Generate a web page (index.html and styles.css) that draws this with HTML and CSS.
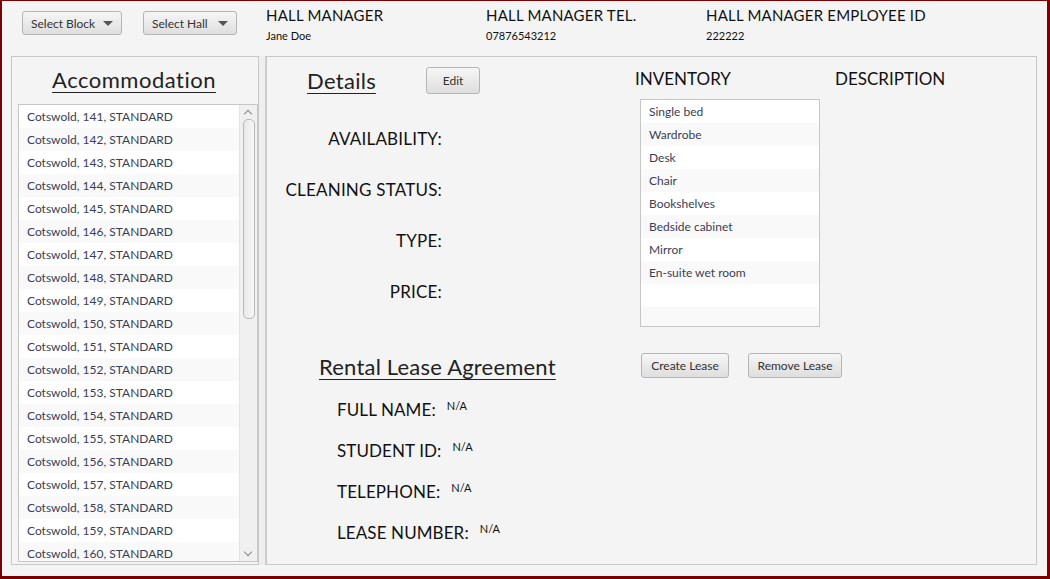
FILE: index.html
```html
<!DOCTYPE html>
<html>
<head>
<meta charset="utf-8">
<link rel="stylesheet" href="styles.css">
</head>
<body>
<div class="window">
  <header class="top">
    <div class="selects">
      <button class="combo">Select Block <span class="arrow"></span></button>
      <button class="combo">Select Hall <span class="arrow"></span></button>
    </div>
    <div class="info">
      <div class="info-col"><div class="info-title">HALL MANAGER</div><div class="info-val">Jane Doe</div></div>
      <div class="info-col"><div class="info-title">HALL MANAGER TEL.</div><div class="info-val">07876543212</div></div>
      <div class="info-col"><div class="info-title">HALL MANAGER EMPLOYEE ID</div><div class="info-val">222222</div></div>
    </div>
  </header>
  <main class="split">
    <section class="left">
      <h2 class="heading acc">Accommodation</h2>
      <div class="list">
        <ul class="rows" id="rooms"></ul>
        <div class="scrollbar">
          <span class="sb-up"></span>
          <span class="thumb"></span>
          <span class="sb-down"></span>
        </div>
      </div>
    </section>
    <div class="divider"></div>
    <section class="right">
      <div class="details">
        <div class="details-head">
          <h2 class="heading det">Details</h2>
          <button class="btn edit">Edit</button>
        </div>
        <div class="fields">
          <div class="field">AVAILABILITY:</div>
          <div class="field">CLEANING STATUS:</div>
          <div class="field">TYPE:</div>
          <div class="field">PRICE:</div>
        </div>
        <h2 class="heading lease">Rental Lease Agreement</h2>
        <div class="lease-fields">
          <div class="lf"><span class="lf-label">FULL NAME:</span><span class="na">N/A</span></div>
          <div class="lf"><span class="lf-label">STUDENT ID:</span><span class="na">N/A</span></div>
          <div class="lf"><span class="lf-label">TELEPHONE:</span><span class="na">N/A</span></div>
          <div class="lf"><span class="lf-label">LEASE NUMBER:</span><span class="na">N/A</span></div>
        </div>
      </div>
      <div class="inventory">
        <div class="inv-titles">
          <div class="inv-title">INVENTORY</div>
          <div class="inv-title desc">DESCRIPTION</div>
        </div>
        <ul class="inv-list">
          <li>Single bed</li>
          <li>Wardrobe</li>
          <li>Desk</li>
          <li>Chair</li>
          <li>Bookshelves</li>
          <li>Bedside cabinet</li>
          <li>Mirror</li>
          <li>En-suite wet room</li>
          <li></li>
          <li class="short"></li>
        </ul>
        <div class="lease-btns">
          <button class="btn create">Create Lease</button>
          <button class="btn remove">Remove Lease</button>
        </div>
      </div>
    </section>
  </main>
</div>
<script>
  var ul = document.getElementById('rooms');
  for (var i = 141; i <= 160; i++) {
    var li = document.createElement('li');
    li.textContent = 'Cotswold, ' + i + ', STANDARD';
    ul.appendChild(li);
  }
</script>
</body>
</html>
```

FILE: styles.css
```css
* { box-sizing: border-box; }
html, body { margin: 0; padding: 0; }
body { font-family: Lato, "Open Sans", sans-serif; color: #111; }
.window {
  width: 1050px; height: 579px;
  background: #f4f4f4;
  border-style: solid; border-color: #7b0000;
  border-width: 1px 3px 3px 2px;
  display: flex; flex-direction: column;
  padding: 0 10px 11px 9px;
}
.top { height: 55px; flex-shrink: 0; display: flex; }
.selects { display: flex; gap: 21px; padding-top: 10px; width: 255px; padding-left: 11px; }
.combo {
  height: 24px; padding: 0 8px 0 8px;
  font: 12px Lato, sans-serif; color: #333; white-space: nowrap;
  border: 1px solid #b5b5b5; border-radius: 3px;
  background: linear-gradient(#f6f6f6, #dedede);
  display: flex; align-items: center; gap: 8px;
}
.combo:first-child { width: 100px; }
.combo:last-child { width: 94px; }
.arrow { width: 0; height: 0; border-left: 5px solid transparent; border-right: 5px solid transparent; border-top: 5px solid #555; margin-left: auto; }
.info { display: flex; padding-top: 5px; }
.info-col { width: 220px; }
.info-title { font-size: 15px; letter-spacing: 0.2px; line-height: 18px; }
.info-val { font-size: 11px; margin-top: 5px; }
.split { flex: 1; min-height: 0; display: flex; }
.left { width: 248px; border: 1px solid #c8c8c8; display: flex; flex-direction: column; align-items: center; padding: 6px 0 2px 6px; min-height: 0; }
.heading { font-weight: normal; text-decoration: underline; text-decoration-thickness: 1px; text-underline-offset: 4px; margin: 0; color: #222; }
.acc { font-size: 22px; letter-spacing: 0.5px; margin: 3px 0 11px -8px; }
.list { flex: 1; min-height: 0; width: 240px; align-self: flex-start; border: 1px solid #c6c6c6; background: #fff; display: flex; overflow: hidden; }
.rows { list-style: none; margin: 0; padding: 0; flex: 1; overflow: hidden; }
.rows li { height: 23px; line-height: 23px; padding-left: 8px; font-size: 12px; color: #3b3d55; white-space: nowrap; }
.rows li:nth-child(even) { background: #f9f9f9; }
.scrollbar { width: 18px; background: #f0f0f0; border-left: 1px solid #e4e4e4; display: flex; flex-direction: column; align-items: center; }
.sb-up, .sb-down { height: 14px; width: 18px; position: relative; flex-shrink: 0; }
.sb-up::after, .sb-down::after { content: ""; position: absolute; left: 5px; width: 5px; height: 5px; border-left: 1px solid #888; border-top: 1px solid #888; }
.sb-up::after { top: 6px; transform: rotate(45deg); }
.sb-down::after { top: 2px; transform: rotate(225deg); }
.thumb { width: 12px; height: 200px; flex-shrink: 0; border: 1px solid #b8b8b8; border-radius: 5px; background: linear-gradient(90deg, #e8e8e8, #f8f8f8); }
.sb-down { margin-top: auto; }
.divider { width: 7px; border-right: 1px solid #d0d0d0; background: #eee; }
.right { flex: 1; border: 1px solid #c8c8c8; display: flex; }
.details { width: 368px; padding: 10px 0 0 40px; }
.details-head { display: flex; align-items: flex-start; }
.det { font-size: 22px; margin-top: 0; letter-spacing: 0.3px; }
.btn {
  font: 12px Lato, sans-serif; color: #333; white-space: nowrap;
  border: 1px solid #b5b5b5; border-radius: 3px;
  background: linear-gradient(#f6f6f6, #dedede);
  height: 26px; padding: 0 8px;
}
.edit { margin-left: 50px; width: 54px; height: 27px; }
.fields { margin-top: 35px; width: 135px; text-align: right; }
.field { font-size: 17px; letter-spacing: 0.2px; height: 51px; line-height: 20px; white-space: nowrap; display: flex; justify-content: flex-end; }
.lease { font-size: 22px; margin: 20px 0 0 12px; letter-spacing: 0.2px; }
.lease-fields { margin-top: 19px; padding-left: 30px; }
.lf { height: 41px; display: flex; align-items: flex-start; }
.lf-label { font-size: 17px; letter-spacing: 0.1px; }
.na { font-size: 11px; margin-left: 11px; margin-top: 0; }
.inventory { padding-top: 11px; display: flex; flex-direction: column; padding-left: 0; }
.inv-titles { display: flex; }
.inv-title { font-size: 17px; width: 200px; margin-left: 0; }
.desc { width: auto; }
.inv-list { list-style: none; margin: 10px 0 0 5px; padding: 0; width: 180px; border: 1px solid #c6c6c6; background: #fff; }
.inv-list li { height: 23px; line-height: 23px; padding-left: 8px; font-size: 12px; color: #3b3d55; }
.inv-list li:nth-child(even) { background: #f9f9f9; }
.inv-list li.short { height: 19px; }
.lease-btns { display: flex; gap: 19px; margin: 26px 0 0 6px; }
.lease-btns .btn { height: 25px; }
.create { width: 88px; }
.remove { width: 94px; }
```
